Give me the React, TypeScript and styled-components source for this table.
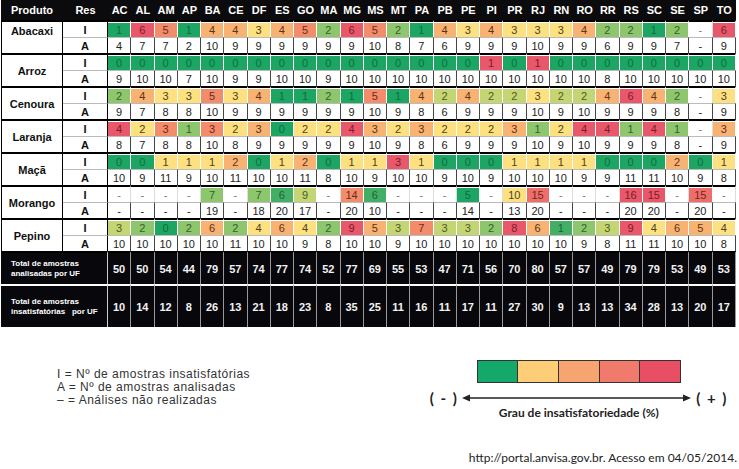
import React from 'react';
import styled, { createGlobalStyle } from 'styled-components';

const GlobalStyle = createGlobalStyle`
    body {
        margin: 0;
        background: #fff;
    }
`

const COLS = 'AC AL AM AP BA CE DF ES GO MA MG MS MT PA PB PE PI PR RJ RN RO RR RS SC SE SP TO'.split(' ');

// [fundo, texto]
const PALETTE: Record<string, [string, string]> = {
    D: ['#1ca563', '#0e6e40'],
    M: ['#43ae66', '#1f6138'],
    L: ['#8dc66d', '#35602a'],
    K: ['#c4d573', '#4f5a25'],
    Y: ['#fde080', '#4d4020'],
    O: ['#f8b272', '#5c3418'],
    S: ['#f28c6b', '#6a2b1c'],
    P: ['#ee6f69', '#6e2424'],
    R: ['#e9576b', '#7a1d2a'],
    W: ['#ffffff', '#777777'],
};

type Product = { name: string; i: string; c: string; a: string; top?: boolean };

const PRODUCTS: Product[] = [
    {
        name: 'Abacaxi', top: true,
        i: '1 6 5 1 4 4 3 4 5 2 6 5 2 1 4 3 4 3 3 3 4 2 2 1 2 - 6',
        c: 'D R S D O O Y O S L R S L D O Y O Y Y Y O L L D L W R',
        a: '4 7 7 2 10 9 9 9 9 9 9 10 8 7 6 9 9 9 10 9 9 6 9 9 7 - 9',
    },
    {
        name: 'Arroz',
        i: '0 0 0 0 0 0 0 0 0 0 0 0 0 0 0 0 1 0 1 0 0 0 0 0 0 0 0',
        c: 'D D D D D D D D D D D D D D D D R D R D D D D D D D D',
        a: '9 10 10 7 10 9 9 10 10 9 10 10 10 10 10 10 10 10 10 10 10 8 10 10 10 10 10',
    },
    {
        name: 'Cenoura',
        i: '2 4 3 3 5 3 4 1 1 2 1 5 1 4 2 4 2 2 3 2 2 4 6 4 2 - 3',
        c: 'L O Y Y S Y O D D L D S D O K O K K Y K K O R O L W Y',
        a: '9 7 8 8 10 9 9 9 9 9 9 10 9 8 6 9 9 9 10 9 10 9 9 9 8 - 9',
    },
    {
        name: 'Laranja',
        i: '4 2 3 1 3 2 3 0 2 2 4 3 2 3 2 2 2 3 1 2 4 4 1 4 1 - 3',
        c: 'R Y S L S Y O D Y Y R O Y O Y Y Y O L Y R R L R L W O',
        a: '8 7 8 8 10 8 9 9 9 9 9 10 9 8 6 9 9 9 10 9 10 9 9 9 8 - 9',
    },
    {
        name: 'Maçã',
        i: '0 0 1 1 1 2 0 1 2 0 1 1 3 1 0 0 0 1 1 1 1 0 0 0 2 0 1',
        c: 'D D Y Y Y O D Y O D Y Y R Y D D D Y Y Y Y D D D O D Y',
        a: '10 9 11 9 10 11 10 10 11 8 10 9 10 10 9 10 9 10 10 10 9 9 11 11 10 9 8',
    },
    {
        name: 'Morango',
        i: '- - - - 7 - 7 6 9 - 14 6 - - - 5 - 10 15 - - - 16 15 - 15 -',
        c: 'W W W W L W L M K W S M W W W D W Y P W W W R R W P W',
        a: '- - - - 19 - 18 20 17 - 20 10 - - - 14 - 13 20 - - - 20 20 - 20 -',
    },
    {
        name: 'Pepino',
        i: '3 2 0 2 6 2 4 6 4 2 9 5 3 7 3 3 2 8 6 1 2 3 9 4 6 5 4',
        c: 'K L D L O L Y O Y L R O K S K K L R O M L K R Y O O Y',
        a: '10 10 10 10 10 11 10 10 9 8 10 10 9 10 10 10 10 10 10 10 9 8 11 11 10 10 8',
    },
];

const TOTAL_A = '50 50 54 44 79 57 74 77 74 52 77 69 55 53 47 71 56 70 80 57 57 49 79 79 53 49 53'.split(' ');
const TOTAL_I = '10 14 12 8 26 13 21 18 23 8 35 25 11 16 11 17 11 27 30 9 13 13 34 28 13 20 17'.split(' ');

const SCALE = ['#14a96b', '#fdcd78', '#f7a570', '#f07a6b', '#e84f64'];

const Page = styled.div`
    width: 739px;
    font-family: "Liberation Sans", Arial, sans-serif;
`
const Table = styled.table`
    margin-left: 1px;
    width: 735px;
    table-layout: fixed;
    border-collapse: separate;
    border-spacing: 0;
    th, td {
        box-sizing: border-box;
        padding: 0;
        text-align: center;
        vertical-align: middle;
        line-height: 12px;
    }
`
const HeadCell = styled.th`
    height: 20px;
    background: #0b0b0d;
    color: #fff;
    font-size: 11px;
    font-weight: bold;
`
const ProductCell = styled.td<{ $top?: boolean }>`
    border-top: 2px solid #000;
    border-left: 1px solid #000;
    border-right: 1px solid #000;
    font-size: 11px;
    font-weight: bold;
    color: #111;
    vertical-align: ${p => (p.$top ? 'top' : 'middle')} !important;
    padding-top: ${p => (p.$top ? '3px' : '0')} !important;
`
const ResCell = styled.td<{ $first?: boolean }>`
    height: ${p => (p.$first ? '17px' : '16px')};
    border-top: ${p => (p.$first ? '2px solid #000' : '1px solid #bbb')};
    border-right: 1px solid #000;
    font-size: 11px;
    font-weight: bold;
    color: #111;
`
const ScoreCell = styled.td<{ $bg: string; $fg: string; $blank: boolean }>`
    height: 17px;
    border-top: 2px solid #000;
    border-right: 1px solid ${p => (p.$blank ? '#ddd' : '#fff')};
    box-shadow: inset 0 1px 0 #fff;
    background: ${p => p.$bg};
    color: ${p => p.$fg};
    font-size: 11px;
`
const CountCell = styled.td`
    height: 16px;
    border-top: 1px solid #bbb;
    border-right: 1px solid #444;
    color: #222;
    font-size: 11px;
`
const TotalLabel = styled.td<{ $tall?: boolean }>`
    height: ${p => (p.$tall ? '43px' : '33px')};
    border-top: 2px solid ${p => (p.$tall ? '#fff' : '#000')};
    border-right: 1px solid #ccc;
    background: #08080c;
    color: #fff;
    font-size: 8px;
    font-weight: bold;
    line-height: 10px !important;
    text-align: left !important;
    padding-left: 10px !important;
    white-space: pre;
`
const TotalCell = styled.td<{ $tall?: boolean }>`
    border-top: 2px solid ${p => (p.$tall ? '#fff' : '#000')};
    border-right: 1px solid #999;
    background: #08080c;
    color: #f2f2f2;
    font-size: 11px;
    font-weight: bold;
`
const Footer = styled.div`
    display: flex;
    justify-content: space-between;
    align-items: flex-start;
    padding-top: 33px;
`
const Legend = styled.div`
    margin: 8px 0 0 57px;
    color: #333;
    font-size: 12px;
    line-height: 13px;
    letter-spacing: 0.5px;
`
const Scale = styled.div`
    display: flex;
    flex-direction: column;
    align-items: center;
    margin-right: 11px;
`
const Bar = styled.div`
    display: flex;
    width: 204px;
    height: 23px;
    border: 1px solid #333;
    box-sizing: border-box;
`
const Swatch = styled.div<{ $color: string }>`
    flex: 1;
    background: ${p => p.$color};
    & + & {
        border-left: 1px solid #333;
    }
`
const AxisRow = styled.div`
    display: flex;
    align-items: center;
    margin-top: 7px;
    height: 16px;
`
const Sign = styled.span`
    font-family: Lato, "Open Sans", sans-serif;
    font-weight: bold;
    font-size: 15px;
    letter-spacing: 1.5px;
    color: #222;
    white-space: pre;
`
const ScaleLabel = styled.div`
    margin-top: 0;
    font-family: Lato, "Open Sans", sans-serif;
    font-weight: bold;
    font-size: 12px;
    line-height: 14px;
    color: #222;
`
const Source = styled.div`
    margin: 31px 2px 0 0;
    text-align: right;
    font-family: Lato, "Open Sans", sans-serif;
    font-size: 12px;
    line-height: 14px;
    color: #222;
`

function Axis() {
    return (
        <svg width="229" height="10" viewBox="0 0 229 10" style={{ margin: '0 5px 0 4px' }}>
            <line x1="6" y1="5" x2="223" y2="5" stroke="#222" strokeWidth="1.3" />
            <polygon points="0,5 8,1.5 8,8.5" fill="#222" />
            <polygon points="229,5 221,1.5 221,8.5" fill="#222" />
        </svg>
    );
}

function ProductRows({ p }: { p: Product }) {
    const iv = p.i.split(' ');
    const cv = p.c.split(' ');
    const av = p.a.split(' ');
    return (
        <>
            <tr>
                <ProductCell rowSpan={2} $top={p.top}>{p.name}</ProductCell>
                <ResCell $first>I</ResCell>
                {iv.map((v, k) => {
                    const [bg, fg] = PALETTE[cv[k]];
                    return (
                        <ScoreCell key={k} $bg={bg} $fg={fg} $blank={cv[k] === 'W'}>{v}</ScoreCell>
                    );
                })}
            </tr>
            <tr>
                <ResCell>A</ResCell>
                {av.map((v, k) => (
                    <CountCell key={k}>{v}</CountCell>
                ))}
            </tr>
        </>
    );
}

export default function App() {
    return (
        <Page>
            <GlobalStyle />
            <Table>
                <colgroup>
                    <col style={{ width: 62 }} />
                    <col style={{ width: 45 }} />
                    {COLS.map(c => <col key={c} />)}
                </colgroup>
                <thead>
                    <tr>
                        <HeadCell>Produto</HeadCell>
                        <HeadCell>Res</HeadCell>
                        {COLS.map(c => <HeadCell key={c}>{c}</HeadCell>)}
                    </tr>
                </thead>
                <tbody>
                    {PRODUCTS.map(p => <ProductRows key={p.name} p={p} />)}
                    <tr>
                        <TotalLabel colSpan={2}>{'Total de amostras\nanalisadas por UF'}</TotalLabel>
                        {TOTAL_A.map((v, k) => <TotalCell key={k}>{v}</TotalCell>)}
                    </tr>
                    <tr>
                        <TotalLabel colSpan={2} $tall>{'Total de amostras\ninsatisfatórias   por UF'}</TotalLabel>
                        {TOTAL_I.map((v, k) => <TotalCell key={k} $tall>{v}</TotalCell>)}
                    </tr>
                </tbody>
            </Table>
            <Footer>
                <Legend>
                    <div>I = Nº de amostras insatisfatórias</div>
                    <div>A = Nº de amostras analisadas</div>
                    <div>– = Análises não realizadas</div>
                </Legend>
                <Scale>
                    <Bar>
                        {SCALE.map(c => <Swatch key={c} $color={c} />)}
                    </Bar>
                    <AxisRow>
                        <Sign>( - )</Sign>
                        <Axis />
                        <Sign>( + )</Sign>
                    </AxisRow>
                    <ScaleLabel>Grau de insatisfatoriedade (%)</ScaleLabel>
                </Scale>
            </Footer>
            <Source>http://portal.anvisa.gov.br. Acesso em 04/05/2014.</Source>
        </Page>
    );
}
